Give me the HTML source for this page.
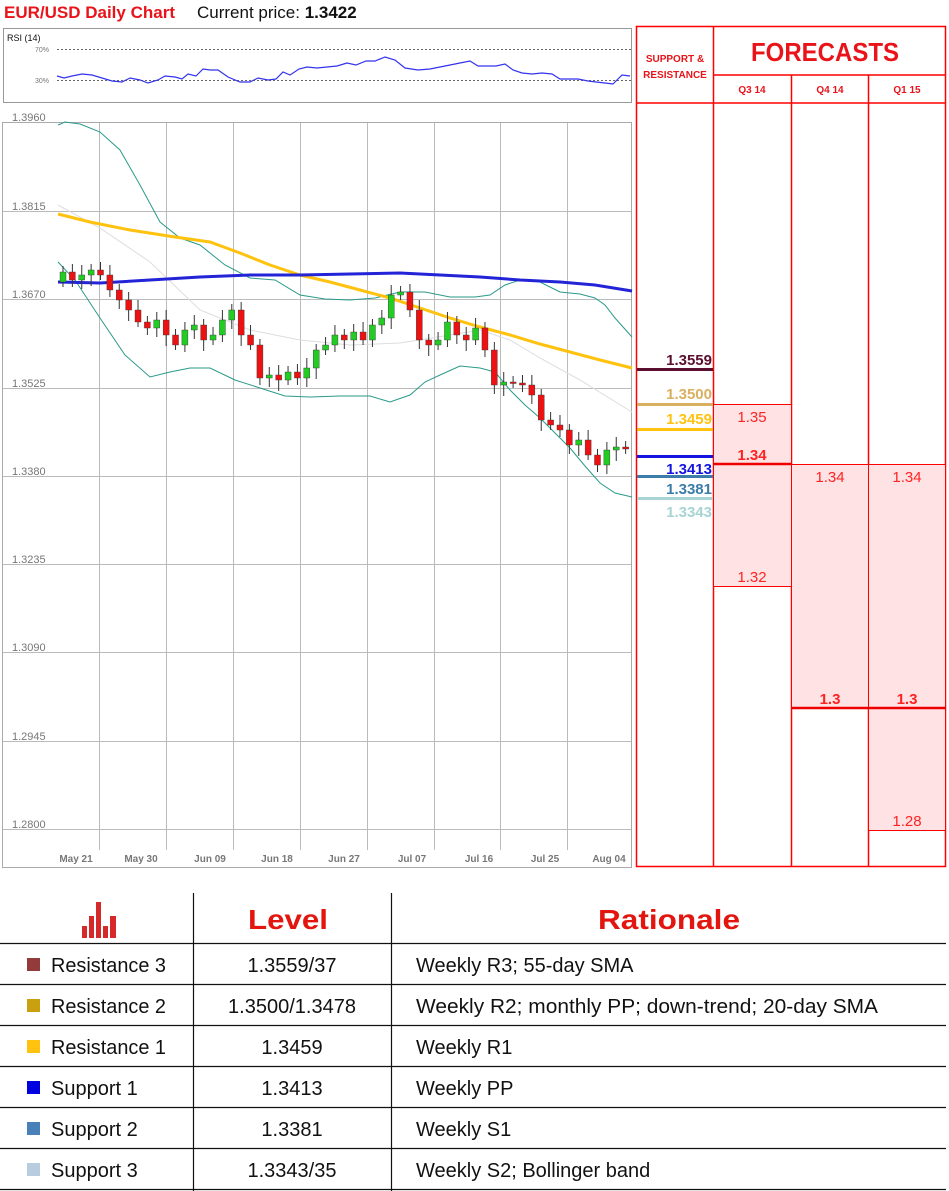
<!DOCTYPE html>
<html><head><meta charset="utf-8"><style>
html,body{margin:0;padding:0;background:#fff;width:949px;height:1191px;overflow:hidden;font-family:"Liberation Sans",sans-serif}
svg text{font-family:"Liberation Sans",sans-serif}
</style></head><body>
<svg id="s" width="949" height="1191" xmlns="http://www.w3.org/2000/svg" style="position:absolute;left:0;top:0">
<text x="4" y="18" font-size="17" font-weight="bold" fill="#e8141a">EUR/USD Daily Chart</text>
<text x="197" y="18" font-size="17" fill="#111">Current price: <tspan font-weight="bold">1.3422</tspan></text>
<!-- RSI -->
<rect x="3.5" y="28.5" width="628" height="74" fill="#fff" stroke="#999"/>
<text x="7" y="41" font-size="9" fill="#111">RSI (14)</text>
<text x="35" y="52" font-size="7" fill="#777">70%</text>
<text x="35" y="83" font-size="7" fill="#777">30%</text>
<line x1="57" y1="49.5" x2="631" y2="49.5" stroke="#666" stroke-dasharray="2,2"/>
<line x1="57" y1="80.5" x2="631" y2="80.5" stroke="#666" stroke-dasharray="2,2"/>
<polyline fill="none" stroke="#3333ee" stroke-width="1.2" points="57,76 64,78 72,76 82,74 92,75 102,78 112,81 122,82 130,78 140,80 148,83 158,80 165,76 175,77 182,79 188,74 196,76 203,69 210,70 218,70 228,77 240,82 250,82 258,78 268,80 276,79 283,72 290,75 299,69 307,67 317,68 327,67 337,66 347,63 356,65 366,61 375,61 385,57 395,60 405,68 418,70 430,69 440,67 450,65 460,63 470,61 478,66 488,66 496,66 505,64 513,70 522,73 532,74 542,73 552,74 560,79 568,79 578,79 588,81 596,82 605,83 613,84 622,75 630,76"/>
<!-- main chart -->
<g id="grid"></g>
<rect x="2.5" y="122.5" width="629" height="745" fill="none" stroke="#aaa"/>
<g font-size="11" fill="#777">
<text x="12" y="121">1.3960</text><text x="12" y="210">1.3815</text><text x="12" y="298">1.3670</text><text x="12" y="387">1.3525</text><text x="12" y="475">1.3380</text><text x="12" y="563">1.3235</text><text x="12" y="651">1.3090</text><text x="12" y="740">1.2945</text><text x="12" y="828">1.2800</text>
</g>
<g font-size="10" font-weight="bold" fill="#777" text-anchor="middle">
<text x="76" y="862">May 21</text><text x="141" y="862">May 30</text><text x="210" y="862">Jun 09</text><text x="277" y="862">Jun 18</text><text x="344" y="862">Jun 27</text><text x="412" y="862">Jul 07</text><text x="479" y="862">Jul 16</text><text x="545" y="862">Jul 25</text><text x="609" y="862">Aug 04</text>
</g>
<polyline fill="none" stroke="#ddd" stroke-width="1" points="58,205 100,228 150,262 200,310 250,330 300,340 350,345 400,343 450,335 480,330 510,340 540,358 580,380 632,412"/>
<polyline fill="none" stroke="#2a9a8a" stroke-width="1" points="58,125 65,122 80,124 100,132 120,150 140,185 160,222 180,238 200,245 225,265 250,278 275,280 300,295 325,299 350,300 375,298 400,292 425,292 450,297 475,297 490,295 505,285 520,280 540,282 560,292 580,294 595,298 605,305 615,318 632,337"/>
<polyline fill="none" stroke="#2a9a8a" stroke-width="1" points="58,262 75,280 100,318 125,355 150,377 170,372 190,368 210,368 235,380 260,388 285,396 310,397 340,396 370,396 390,402 410,395 425,382 440,375 460,366 480,368 495,372 510,390 525,405 540,418 555,433 570,448 585,466 600,483 615,493 632,497"/>
<polyline fill="none" stroke="#ffc20e" stroke-width="3" points="58,214 90,222 130,230 175,237 210,242 240,253 270,265 300,275 330,282 360,290 390,298 420,308 450,318 480,327 510,335 540,344 570,352 600,360 632,368"/>
<polyline fill="none" stroke="#2323d8" stroke-width="3" points="58,282 100,283 150,280 200,277 250,275 300,275 350,274 400,273 440,275 480,277 520,280 560,282 595,285 632,291"/>
<g id="candles"></g>
<!-- right panel -->
<g stroke="#f00" stroke-width="1.5" fill="none">
<rect x="636.5" y="26.5" width="309" height="840" />
<line x1="713.5" y1="26" x2="713.5" y2="867"/>
<line x1="791.5" y1="75" x2="791.5" y2="867"/>
<line x1="868.5" y1="75" x2="868.5" y2="867"/>
<line x1="713" y1="75" x2="946" y2="75"/>
<line x1="636" y1="103" x2="946" y2="103"/>
</g>
<rect x="714" y="404" width="77" height="182" fill="#ffe3e4"/>
<rect x="792" y="464" width="76" height="244" fill="#ffe3e4"/>
<rect x="869" y="464" width="76" height="366" fill="#ffe3e4"/>
<g stroke="#f00" stroke-width="1">
<line x1="713" y1="404.5" x2="791" y2="404.5"/>
<line x1="713" y1="586.5" x2="791" y2="586.5"/>
<line x1="791" y1="464.5" x2="946" y2="464.5"/>
<line x1="868" y1="830.5" x2="946" y2="830.5"/>
<line x1="713.5" y1="404" x2="713.5" y2="867"/><line x1="791.5" y1="404" x2="791.5" y2="867"/><line x1="868.5" y1="404" x2="868.5" y2="867"/>
</g>
<line x1="713" y1="464" x2="791" y2="464" stroke="#e00" stroke-width="2.5"/>
<line x1="791" y1="708" x2="946" y2="708" stroke="#e00" stroke-width="2.5"/>
<g fill="#e8141a" text-anchor="middle" font-weight="bold">
<text x="825" y="61" font-size="26" textLength="148" lengthAdjust="spacingAndGlyphs">FORECASTS</text>
<text x="675" y="62" font-size="10">SUPPORT &amp;</text>
<text x="675" y="78" font-size="10">RESISTANCE</text>
<text x="752" y="93" font-size="10">Q3 14</text><text x="830" y="93" font-size="10">Q4 14</text><text x="907" y="93" font-size="10">Q1 15</text>
</g>
<g fill="#f22" text-anchor="middle" font-size="15">
<text x="752" y="422">1.35</text><text x="752" y="460" font-weight="bold">1.34</text><text x="752" y="582">1.32</text>
<text x="830" y="482">1.34</text><text x="907" y="482">1.34</text>
<text x="830" y="704" font-weight="bold">1.3</text><text x="907" y="704" font-weight="bold">1.3</text>
<text x="907" y="826">1.28</text>
</g>
<g font-size="15" font-weight="bold" text-anchor="end">
<text x="712" y="365" fill="#5a0f2e">1.3559</text>
<text x="712" y="399" fill="#d9b060">1.3500</text>
<text x="712" y="424" fill="#ffc20e">1.3459</text>
<text x="712" y="474" fill="#1414e0">1.3413</text>
<text x="712" y="494" fill="#3c7ca8">1.3381</text>
<text x="712" y="517" fill="#a8d4d4">1.3343</text>
</g>
<rect x="637" y="368" width="76" height="3" fill="#5a0f2e"/>
<rect x="637" y="403" width="76" height="3" fill="#d9b060"/>
<rect x="637" y="428" width="76" height="3" fill="#ffc20e"/>
<rect x="637" y="455" width="76" height="3" fill="#1414e0"/>
<rect x="637" y="475" width="76" height="3" fill="#3c7ca8"/>
<rect x="637" y="497" width="76" height="3" fill="#a8d4d4"/>
<!-- table -->
<g stroke="#111" stroke-width="1.2">
<line x1="193.5" y1="893" x2="193.5" y2="1191"/><line x1="391.5" y1="893" x2="391.5" y2="1191"/>
<line x1="0" y1="943.5" x2="946" y2="943.5"/><line x1="0" y1="984.5" x2="946" y2="984.5"/><line x1="0" y1="1025.5" x2="946" y2="1025.5"/><line x1="0" y1="1066.5" x2="946" y2="1066.5"/><line x1="0" y1="1107.5" x2="946" y2="1107.5"/><line x1="0" y1="1148.5" x2="946" y2="1148.5"/><line x1="0" y1="1189.5" x2="946" y2="1189.5"/>
</g>
<g fill="#d62a2a"><rect x="82" y="926" width="5" height="12"/><rect x="89" y="916" width="5" height="22"/><rect x="96" y="902" width="5" height="36"/><rect x="103" y="926" width="5" height="12"/><rect x="110" y="916" width="6" height="22"/></g>
<g fill="#e3150f" font-weight="bold" font-size="28" text-anchor="middle"><text x="288" y="929" textLength="80" lengthAdjust="spacingAndGlyphs">Level</text><text x="669" y="929" textLength="142" lengthAdjust="spacingAndGlyphs">Rationale</text></g>
<g font-size="20" fill="#111">
<rect x="27" y="958" width="13" height="13" fill="#933a3a"/><text x="51" y="972" textLength="115" lengthAdjust="spacingAndGlyphs">Resistance 3</text>
<rect x="27" y="999" width="13" height="13" fill="#c9a010"/><text x="51" y="1013" textLength="115" lengthAdjust="spacingAndGlyphs">Resistance 2</text>
<rect x="27" y="1040" width="13" height="13" fill="#ffc20e"/><text x="51" y="1054" textLength="115" lengthAdjust="spacingAndGlyphs">Resistance 1</text>
<rect x="27" y="1081" width="13" height="13" fill="#0000e0"/><text x="51" y="1095">Support 1</text>
<rect x="27" y="1122" width="13" height="13" fill="#4a80b8"/><text x="51" y="1136">Support 2</text>
<rect x="27" y="1163" width="13" height="13" fill="#b8cce0"/><text x="51" y="1177">Support 3</text>
<g text-anchor="middle"><text x="292" y="972">1.3559/37</text><text x="292" y="1013">1.3500/1.3478</text><text x="292" y="1054">1.3459</text><text x="292" y="1095">1.3413</text><text x="292" y="1136">1.3381</text><text x="292" y="1177">1.3343/35</text></g>
<text x="416" y="972">Weekly R3; 55-day SMA</text><text x="416" y="1013" textLength="462" lengthAdjust="spacingAndGlyphs">Weekly R2; monthly PP; down-trend; 20-day SMA</text><text x="416" y="1054">Weekly R1</text><text x="416" y="1095">Weekly PP</text><text x="416" y="1136">Weekly S1</text><text x="416" y="1177">Weekly S2; Bollinger band</text>
</g>
</svg>
<script>
var NS="http://www.w3.org/2000/svg",g=document.getElementById("grid"),c=document.getElementById("candles");
function el(p,t,a){var e=document.createElementNS(NS,t);for(var k in a)e.setAttribute(k,a[k]);p.appendChild(e);return e;}
[211,299,388,476,564,652,741,829].forEach(function(y){el(g,"line",{x1:3,x2:631,y1:y+.5,y2:y+.5,stroke:"#bbb"})});
[99,166,233,300,367,434,500,567].forEach(function(x){el(g,"line",{x1:x+.5,x2:x+.5,y1:123,y2:850,stroke:"#bbb"})});
var cl=[272,280,275,270,275,290,300,310,322,328,320,335,345,330,325,340,335,320,310,335,345,378,375,380,372,378,368,350,345,335,340,332,340,325,318,295,292,310,340,345,340,322,335,340,328,350,385,382,383,385,395,420,425,430,445,440,455,465,450,447,449];
var op=282,step=(632-60)/cl.length;
cl.forEach(function(v,i){var x=60+i*step,o=op,t=Math.min(o,v),b=Math.max(o,v),col=v<o?"#22cc22":"#ee1111";
el(c,"line",{x1:x+3,x2:x+3,y1:t-6-(i%3)*2,y2:b+5+(i%4)*2,stroke:"#333","stroke-width":1});
el(c,"rect",{x:x,y:t,width:6,height:Math.max(b-t,1.5),fill:col,stroke:"#333","stroke-width":.4});op=v;});
</script>
</body></html>
